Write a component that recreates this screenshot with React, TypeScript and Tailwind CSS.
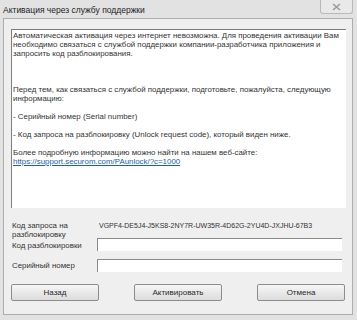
const lines = [
  "Автоматическая активация через интернет невозможна. Для проведения активации Вам",
  "необходимо связаться с службой поддержки компании-разработчика приложения и",
  "запросить код разблокирования.",
  "",
  "",
  "",
  "Перед тем, как связаться с службой поддержки, подготовьте, пожалуйста, следующую",
  "информацию:",
  "",
  "- Серийный номер (Serial number)",
  "",
  "- Код запроса на разблокировку (Unlock request code), который виден ниже.",
  "",
  "Более подробную информацию можно найти на нашем веб-сайте:",
];

function Button({ label }: { label: string }) {
  return (
    <div className="flex h-[17px] w-[88px] items-center justify-center rounded-[2px] border border-[#8d8d8d] bg-gradient-to-b from-[#f6f6f6] to-[#dcdcdc] text-[8px] text-[#2a2a2a]">
      {label}
    </div>
  );
}

function Field() {
  return (
    <div className="h-[13px] w-[245px] border-t border-l border-[#8a8a8a] border-r-[#e2e2e2] border-b-[#e2e2e2] bg-white" />
  );
}

export default function App() {
  return (
    <div className="h-[320px] w-[357px] overflow-hidden bg-[#e2e2e2] font-['Liberation_Sans',Arial,sans-serif] text-[#333]">
      {/* title bar */}
      <div className="flex h-[18px] items-start justify-between">
        <div className="pl-[3px] pt-[5px] text-[8.5px] leading-[10px] text-[#1c1c1c]">
          Активация через службу поддержки
        </div>
        <div className="mr-[4px] flex h-[14px] w-[33px] items-center justify-center rounded-b-[3px] border border-t-0 border-[#b9b9b9] bg-[#e9e9e9]">
          <svg width="9" height="8" viewBox="0 0 9 8">
            <path d="M1 1 L8 7 M8 1 L1 7" stroke="#9a9a9a" strokeWidth="1.6" fill="none" />
          </svg>
        </div>
      </div>

      {/* client frame */}
      <div className="ml-[3px] h-[297px] w-[350px] border border-[#adadad] bg-[#efefef] pl-[7px] pt-[10px]">
        {/* message box */}
        <div className="h-[179px] w-[335px] border-t border-l border-[#7e7e7e] border-r-[#d8d8d8] border-b-[#d8d8d8] bg-white pl-[1px] pt-[1px] text-[7.9px] leading-[9px]">
          {lines.map((l, i) => (
            <div key={i} className="h-[9px] whitespace-nowrap">
              {l}
            </div>
          ))}
          <div className="h-[9px] whitespace-nowrap text-[#1a5fb4] underline">
            https://support.securom.com/PAunlock/?c=1000
          </div>
        </div>

        {/* form */}
        <div className="mt-[13px] pl-[1px] text-[7.9px] leading-[9px]">
          <div className="flex">
            <div className="w-[85px]">
              <div>Код запроса на</div>
              <div>разблокировку</div>
            </div>
            <div className="pl-[2px] whitespace-nowrap text-[7px]">
              VGPF4-DE5J4-J5KS8-2NY7R-UW35R-4D62G-2YU4D-JXJHU-67B3
            </div>
          </div>
          <div className="-mt-[1px] flex items-center">
            <div className="w-[85px] pt-[2px]">Код разблокировки</div>
            <Field />
          </div>
          <div className="mt-[8px] flex items-center">
            <div className="w-[85px]">Серийный номер</div>
            <Field />
          </div>
        </div>

        {/* buttons */}
        <div className="mt-[12px] flex w-[335px] justify-between pr-[1px]">
          <Button label="Назад" />
          <Button label="Активировать" />
          <Button label="Отмена" />
        </div>
      </div>
    </div>
  );
}
